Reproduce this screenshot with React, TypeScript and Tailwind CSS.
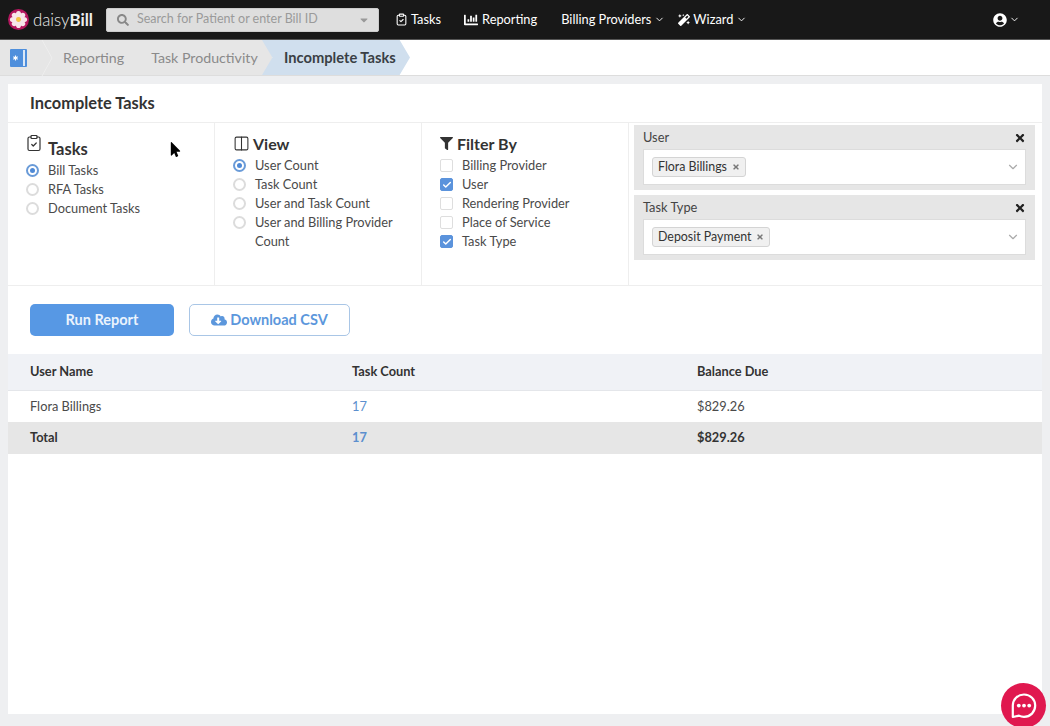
import { ClipboardCheck, Columns2, ChevronDown, Check } from "lucide-react";
import { FaSearch, FaChartBar, FaMagic, FaUserCircle, FaCloudDownloadAlt, FaTimes, FaFilter, FaCaretDown, FaMousePointer } from "react-icons/fa";

function Logo() {
  const petals = [0, 45, 90, 135, 180, 225, 270, 315];
  return (
    <svg width="21" height="21" viewBox="0 0 22 22">
      <circle cx="11" cy="11" r="11" fill="#b5175f" />
      {petals.map((a) => (
        <ellipse key={a} cx="11" cy="5.6" rx="2.7" ry="3.6" fill="#f7e6ea" transform={`rotate(${a} 11 11)`} />
      ))}
      <circle cx="11" cy="11" r="2.6" fill="#f4c542" />
    </svg>
  );
}

function BookIcon() {
  return (
    <svg width="17" height="18" viewBox="0 0 17 18">
      <rect x="0" y="0" width="17" height="18" rx="1" fill="#4f8fdc" />
      <rect x="13" y="1" width="2" height="16" fill="#dbe8f7" />
      <path d="M5.5 6.5v5M3.3 7.7l4.4 2.6M7.7 7.7l-4.4 2.6" stroke="white" strokeWidth="1.1" />
    </svg>
  );
}

function Radio({ label, on }: { label: string; on?: boolean }) {
  return (
    <div className="flex h-[19px] items-center">
      <span className={`flex h-[13px] w-[13px] shrink-0 items-center justify-center rounded-full border-2 ${on ? "border-[#6a9bd8]" : "border-[#dcdcdc]"}`}>
        {on && <span className="h-[5px] w-[5px] rounded-full bg-[#4f8ad6]" />}
      </span>
      <span className="ml-[9px]">{label}</span>
    </div>
  );
}

function Checkbox({ label, on }: { label: string; on?: boolean }) {
  return (
    <div className="flex h-[19px] items-center">
      <span className={`flex h-[13px] w-[13px] shrink-0 items-center justify-center rounded-[2px] border ${on ? "border-[#5b93dc] bg-[#5b93dc]" : "border-[#dedede] bg-white"}`}>
        {on && <Check size={10} strokeWidth={3.5} className="text-white" />}
      </span>
      <span className="ml-[9px]">{label}</span>
    </div>
  );
}

function FilterBox({ title, value }: { title: string; value: string }) {
  return (
    <div className="h-[65px] bg-[#e6e6e6] px-[9px]">
      <div className="flex h-[24px] items-center justify-between pt-[1px]">
        <span className="text-[#444]">{title}</span>
        <FaTimes size={12} className="text-[#222]" />
      </div>
      <div className="flex h-[36px] items-center justify-between border border-[#dcdcdc] bg-white pl-[8px] pr-[5px]">
        <span className="flex h-[20px] items-center gap-[5px] rounded-[3px] border border-[#d4d4d4] bg-[#f0f0f0] px-[5px] text-[12.4px] text-[#333]">
          {value}
          <FaTimes size={8} className="text-[#777]" />
        </span>
        <ChevronDown size={14} className="text-[#aaa]" />
      </div>
    </div>
  );
}

export default function App() {
  return (
    <div className="relative flex h-[726px] w-[1050px] flex-col overflow-hidden bg-[#eeeff1] font-['Lato','Liberation_Sans',sans-serif] text-[12.8px] text-[#4a4a4a]">
      {/* top bar */}
      <header className="flex h-[40px] shrink-0 items-center border-b border-[#555] bg-[#181818] pl-2 pr-[30px] text-white">
        <Logo />
        <span className="ml-[4px] w-[73px] text-[16.8px] font-light text-[#eee]">
          daisy<span className="font-bold">Bill</span>
        </span>
        <div className="flex h-[24px] w-[273px] items-center rounded-[2px] border border-[#ccc] bg-[#dedede] pl-[10px] pr-[8px] text-[12.5px] text-[#9a9a9a]">
          <FaSearch size={12} className="text-[#888]" />
          <span className="ml-[8px] flex-1">Search for Patient or enter Bill ID</span>
          <FaCaretDown size={12} className="text-[#999]" />
        </div>
        <span className="ml-[16px] flex items-center gap-[3px]"><ClipboardCheck size={13} />Tasks</span>
        <span className="ml-[23px] flex items-center gap-[4px]"><FaChartBar size={14} />Reporting</span>
        <span className="ml-[24px] flex items-center gap-[3px]">Billing Providers<ChevronDown size={11} /></span>
        <span className="ml-[13px] flex items-center gap-[3px]"><FaMagic size={12} />Wizard<ChevronDown size={11} /></span>
        <span className="ml-auto flex items-center gap-[2px]"><FaUserCircle size={14} /><ChevronDown size={11} /></span>
      </header>

      {/* breadcrumb */}
      <nav className="flex h-[36px] shrink-0 items-center border-b-[1px] border-[#ddd] bg-white text-[14.2px]">
        <div className="flex h-full w-[272px] items-center bg-[#e6e6e6] text-[#8a8a8a]">
          <span className="ml-[10px] flex"><BookIcon /></span>
          <svg width="12" height="36" viewBox="0 0 12 36" className="ml-[14px]">
            <path d="M1 0 L11 18 L1 36" fill="none" stroke="#eeeeee" strokeWidth="1" />
          </svg>
          <span className="ml-[10px]">Reporting</span>
          <span className="ml-[27px]">Task Productivity</span>
        </div>
        <div className="-ml-[10px] flex h-full w-[148px] items-center bg-[#d0dfee] pl-[22px] text-[14.7px] font-bold text-[#3a3f45] [clip-path:polygon(0_0,93%_0,100%_50%,93%_100%,0_100%,7%_50%)]">
          Incomplete Tasks
        </div>
      </nav>

      {/* card */}
      <main className="mx-2 mt-2 mb-3 flex flex-1 flex-col bg-white">
        <h1 className="flex h-[39px] shrink-0 items-center border-b border-[#eeeeee] pl-[22px] pt-[1px] text-[16.4px] font-bold text-[#333]">Incomplete Tasks</h1>

        <section className="flex h-[163px] shrink-0 border-b border-[#eeeeee]">
          <div className="w-[207px] border-r border-[#eeeeee] pl-[18px]">
            <div className="flex h-[38px] items-start text-[#333]">
              <ClipboardCheck size={18} strokeWidth={1.6} className="-ml-[1px] mt-[11px] shrink-0" />
              <span className="mt-[15px] ml-[5px] text-[16.5px] font-bold leading-[22px]">Tasks</span>
            </div>
            <Radio label="Bill Tasks" on />
            <Radio label="RFA Tasks" />
            <Radio label="Document Tasks" />
          </div>
          <div className="w-[207px] border-r border-[#eeeeee] pl-[18px]">
            <div className="flex h-[33px] items-center pt-[8px] text-[16px] font-bold text-[#333]">
              <Columns2 size={17} strokeWidth={1.5} />
              <span className="ml-[3px]">View</span>
            </div>
            <Radio label="User Count" on />
            <Radio label="Task Count" />
            <Radio label="User and Task Count" />
            <Radio label="User and Billing Provider" />
            <div className="ml-[22px] flex h-[19px] items-center">Count</div>
          </div>
          <div className="w-[207px] border-r border-[#eeeeee] pl-[18px]">
            <div className="flex h-[33px] items-center pt-[8px] text-[16px] font-bold text-[#333]">
              <FaFilter size={13} />
              <span className="ml-[4px]">Filter By</span>
            </div>
            <Checkbox label="Billing Provider" />
            <Checkbox label="User" on />
            <Checkbox label="Rendering Provider" />
            <Checkbox label="Place of Service" />
            <Checkbox label="Task Type" on />
          </div>
          <div className="flex flex-1 flex-col gap-[5px] pt-[2px] pl-[5px] pr-[7px]">
            <FilterBox title="User" value="Flora Billings" />
            <FilterBox title="Task Type" value="Deposit Payment" />
          </div>
        </section>

        <div className="flex h-[68px] shrink-0 items-center gap-[15px] pl-[22px]">
          <button className="h-[32px] w-[144px] rounded-[5px] bg-[#5798e4] text-[14.5px] font-bold text-[#eaf3fd]">Run Report</button>
          <button className="flex h-[32px] w-[161px] items-center justify-center gap-[3px] rounded-[5px] border border-[#a9c6e6] bg-white text-[14.5px] font-bold text-[#5c97dc]">
            <FaCloudDownloadAlt size={16} />Download CSV
          </button>
        </div>

        <div className="grid h-[37px] shrink-0 grid-cols-[322px_345px_1fr] items-center border-b border-[#e4e6ea] bg-[#f0f2f6] pl-[22px] font-bold text-[#333]">
          <span>User Name</span><span>Task Count</span><span>Balance Due</span>
        </div>
        <div className="grid h-[31px] shrink-0 grid-cols-[322px_345px_1fr] items-center pl-[22px]">
          <span>Flora Billings</span><span className="text-[#5c8fce]">17</span><span>$829.26</span>
        </div>
        <div className="grid h-[32px] shrink-0 grid-cols-[322px_345px_1fr] items-center bg-[#e6e6e6] pl-[22px] font-bold text-[#333]">
          <span>Total</span><span className="text-[#5c8fce]">17</span><span>$829.26</span>
        </div>
      </main>

      {/* mouse pointer */}
      <FaMousePointer size={15} className="absolute left-[168px] top-[142px] text-black" />

      {/* chat bubble */}
      <button className="absolute left-[1001px] top-[683px] flex h-[45px] w-[45px] items-center justify-center rounded-full bg-[#e0184f]">
        <svg width="30" height="30" viewBox="0 0 30 30" fill="none">
          <path d="M15 3.5C8.6 3.5 3.8 8.4 3.8 14.6V26L10 24.6C11.5 25.4 13.2 25.8 15 25.8C21.4 25.8 26.2 21 26.2 14.6C26.2 8.4 21.4 3.5 15 3.5Z" stroke="white" strokeWidth="2.2" strokeLinejoin="round" />
          <circle cx="9.8" cy="14.6" r="1.9" fill="white" />
          <circle cx="15" cy="14.6" r="1.9" fill="white" />
          <circle cx="20.2" cy="14.6" r="1.9" fill="white" />
        </svg>
      </button>
    </div>
  );
}
